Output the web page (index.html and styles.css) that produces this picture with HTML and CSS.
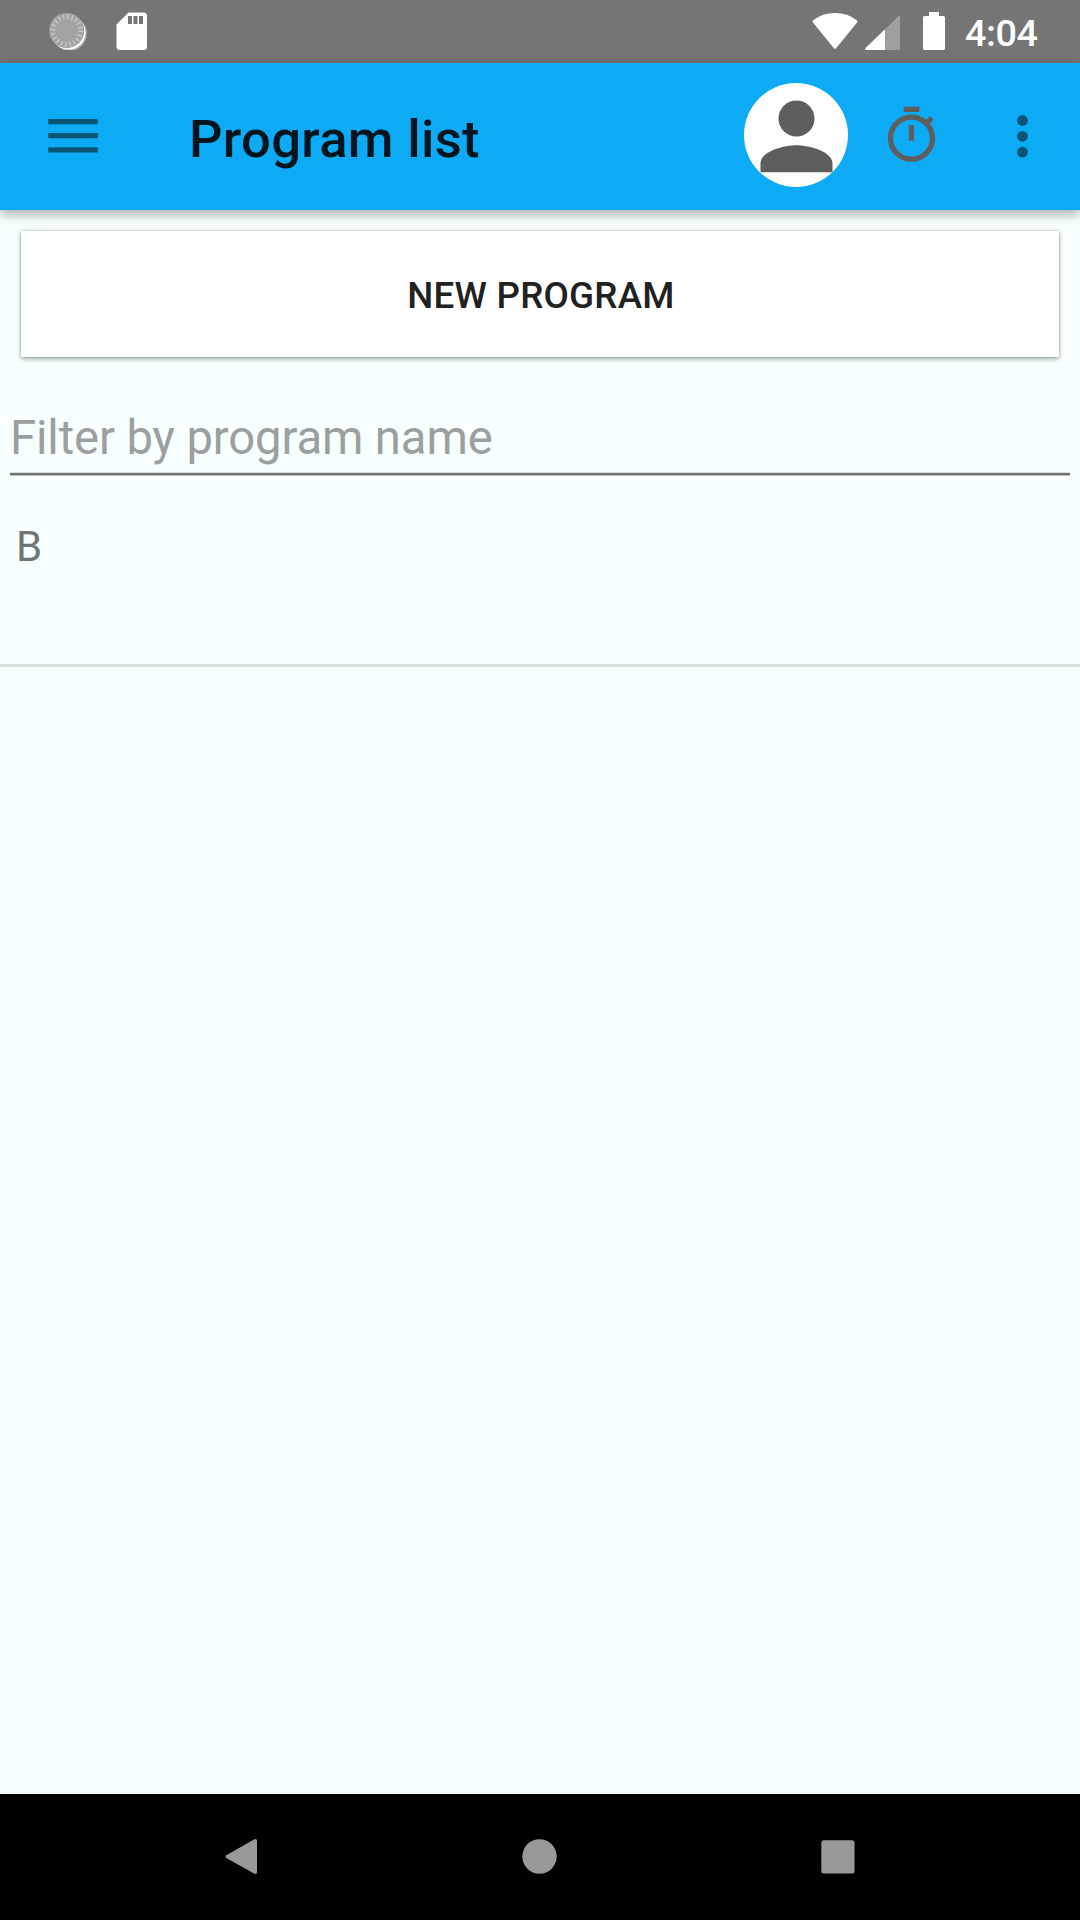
FILE: index.html
```html
<!DOCTYPE html>
<html lang="en">
<head>
<meta charset="utf-8">
<title>Program list</title>
<link rel="stylesheet" href="styles.css">
</head>
<body>
<div class="screen">
  <header class="status-bar">
    <svg class="sync-icon" width="38" height="38" viewBox="0 0 38 38">
      <circle cx="20.5" cy="21.5" r="17.3" fill="#b4b4b4"/>
      <circle cx="19.5" cy="20.5" r="17.1" fill="#fff"/>
      <circle cx="17.7" cy="18.6" r="17.6" fill="#a3a3a3"/>
      <circle cx="17.7" cy="18.6" r="13.8" fill="none" stroke="#c6c6c6" stroke-width="5" stroke-dasharray="1.5 2.835"/>
    </svg>
    <svg class="card-icon" width="32" height="39" viewBox="0 0 32 39">
      <path d="M12.5 .5H27.500q3.500 0 3.500 3.500V34.500q0 3.500-3.500 3.500H4q-3.500 0-3.500-3.500V12.500Z" fill="#fff"/>
      <path d="M12 4h4v8h-4zM17.500 4h4v8h-4zM23 4h4v8h-4z" fill="#757575"/>
    </svg>
    <svg class="wifi-icon" width="46" height="38" viewBox="0 0 46 38">
      <path d="M1.200 8.300Q10.500 1 23 1T44.800 8.300Q45.800 9.300 45 10.500L24.500 35.800Q23 37.600 21.500 35.800L1 10.500Q.2 9.300 1.200 8.300Z" fill="#fff"/>
    </svg>
    <svg class="signal-icon" width="36" height="36" viewBox="0 0 36 36">
      <path d="M20 14.500 33 1.200Q35 -.2 35 2V33.500Q35 35 33.500 35H20Z" fill="#9f9f9f"/>
      <path d="M20 14.200V35H1.500Q-.6 35 .5 33Z" fill="#fff"/>
    </svg>
    <svg class="battery-icon" width="22" height="38" viewBox="0 0 22 38">
      <path d="M6 0H16V4H20.500Q22 4 22 5.500V36.500Q22 38 20.500 38H1.500Q0 38 0 36.500V5.500Q0 4 1.500 4H6Z" fill="#fff"/>
    </svg>
    <span class="clock">4:04</span>
  </header>

  <nav class="toolbar">
    <svg class="menu-icon" width="50" height="34" viewBox="0 0 50 34">
      <path d="M.3 0H49.800V5.200H.3zM.3 14.100H49.800V19.300H.3zM.3 28.200H49.800V33.400H.3z" fill="#075473"/>
    </svg>
    <h1 class="title">Program list</h1>
    <svg class="avatar" width="104" height="104" viewBox="0 0 104 104">
      <circle cx="52" cy="52" r="52" fill="#fff"/>
      <circle cx="52.500" cy="35.500" r="18" fill="#5e5e5e"/>
      <path d="M52.500 62.300c-12 0-36 6-36 18v9h72v-9c0-12-24-18-36-18z" fill="#5e5e5e"/>
    </svg>
    <svg class="timer-icon" width="63" height="63" viewBox="0 0 24 24">
      <path d="M15 1H9v2h6V1zm-4 13h2V8h-2v6zm8.030-6.610l1.420-1.420c-.43-.51-.9-.99-1.410-1.410l-1.420 1.420C16.070 4.740 14.120 4 12 4c-4.970 0-9 4.030-9 9s4.020 9 9 9 9-4.030 9-9c0-2.120-.74-4.070-1.970-5.610zM12 20c-3.870 0-7-3.130-7-7s3.130-7 7-7 7 3.130 7 7-3.130 7-7 7z" fill="#5e5e5e"/>
    </svg>
    <svg class="more-icon" width="11" height="43" viewBox="0 0 11 43">
      <g fill="#075473"><circle cx="5.500" cy="5.500" r="5.400"/><circle cx="5.500" cy="21.300" r="5.400"/><circle cx="5.500" cy="37.100" r="5.400"/></g>
    </svg>
  </nav>

  <main class="content">
    <button class="new-program" type="button">NEW PROGRAM</button>
    <input class="filter" type="text" placeholder="Filter by program name" aria-label="Filter by program name">
    <ul class="programs">
      <li class="program">B</li>
    </ul>
  </main>

  <footer class="nav-bar">
    <svg width="34" height="38" viewBox="0 0 34 38">
      <path d="M1.300 17.300 29 1.400Q32 0 32 3V34Q32 37 29 35.600L1.300 20Q-.2 18.700 1.300 17.300Z" fill="#999"/>
    </svg>
    <svg width="36" height="36" viewBox="0 0 36 36"><circle cx="17.500" cy="17.500" r="17.200" fill="#999"/></svg>
    <svg width="34" height="34" viewBox="0 0 34 34"><rect x=".3" y=".2" width="33.200" height="33.200" rx="2.500" fill="#999"/></svg>
  </footer>
</div>
</body>
</html>
```
FILE: styles.css
```css
* {
  box-sizing: border-box;
}

body {
  margin: 0;
  font-family: Roboto, sans-serif;
}

.screen {
  display: flex;
  flex-direction: column;
  width: 1080px;
  height: 1920px;
  overflow: hidden;
  background: #f7ffff;
}

svg {
  display: block;
  flex: none;
}

.status-bar {
  display: flex;
  flex: none;
  align-items: flex-start;
  height: 63px;
  padding: 12px 42px 0 49px;
  background: #757575;
}

.card-icon {
  margin-left: 29px;
}

.wifi-icon {
  margin-left: auto;
}

.signal-icon {
  margin: 3px 0 0 7px;
}

.battery-icon {
  margin-left: 22px;
}

.clock {
  width: 73px;
  margin-left: 20px;
  padding-top: 1px;
  color: #fff;
  font-size: 37.8px;
  font-weight: 500;
  letter-spacing: -0.5px;
  line-height: 40px;
}

.toolbar {
  display: flex;
  flex: none;
  align-items: flex-start;
  height: 147px;
  padding-left: 48px;
  background: #0dabf5;
  box-shadow: 0 4px 11px rgba(0, 0, 0, 0.34);
}

.menu-icon {
  margin-top: 56px;
}

.title {
  margin: 46px 0 0 91px;
  color: #02151f;
  font-size: 52.5px;
  font-weight: 500;
  letter-spacing: 0.33px;
  line-height: 60px;
}

.avatar {
  margin: 20px 0 0 auto;
}

.timer-icon {
  margin: 41px 0 0 32px;
}

.more-icon {
  margin: 52px 52px 0 74px;
}

.content {
  display: flex;
  flex: 1;
  flex-direction: column;
  padding-top: 21px;
}

.new-program {
  height: 126px;
  margin: 0 21px;
  padding: 2px 0 0 2px;
  border: 0;
  background: #fff;
  box-shadow: 0 2px 5px rgba(0, 0, 0, 0.3), 0 0 3px rgba(0, 0, 0, 0.24);
  color: #212121;
  font: 500 36.75px Roboto, sans-serif;
  letter-spacing: 0.22px;
}

.filter {
  height: 72px;
  margin: 46px 10px 0;
  padding: 0;
  border: 0;
  border-bottom: 2px solid #6f7373;
  border-radius: 0;
  outline: 0;
  background: transparent;
  box-shadow: 0 1px #b9bfbf, inset 0 -1px #dbe2e2;
  font: 400 47.25px Roboto, sans-serif;
  letter-spacing: -0.13px;
}

.filter::placeholder {
  color: #9b9f9f;
  opacity: 1;
}

.programs {
  margin: 0;
  padding: 0;
  list-style: none;
}

.program {
  height: 192px;
  padding: 47px 16px 0;
  border-bottom: 3px solid #d9e0e0;
  color: #707474;
  font-size: 42px;
  line-height: 50px;
}

.nav-bar {
  display: flex;
  flex: none;
  align-items: center;
  justify-content: space-between;
  height: 126px;
  padding: 0 225px;
  background: #000;
}
```
